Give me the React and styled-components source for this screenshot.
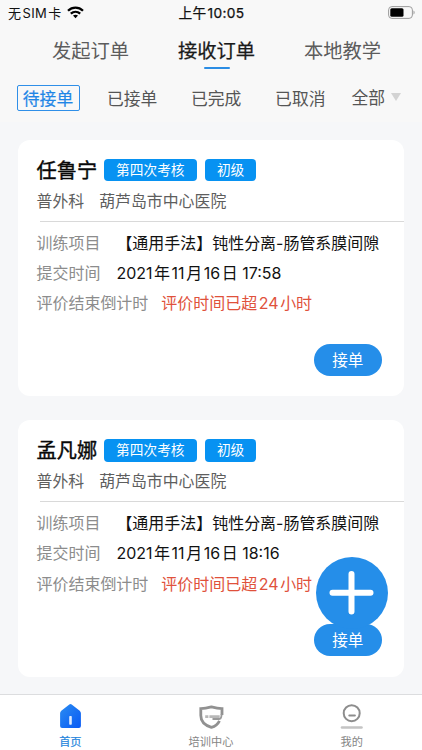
import React from 'react'
import styled, { createGlobalStyle } from 'styled-components'

const GlobalStyle = createGlobalStyle`
  * {
    box-sizing: border-box;
  }
  body {
    margin: 0;
    background: #f6f7f9;
    font-family: Inter, 'Noto Sans CJK SC', sans-serif;
  }
  button {
    font-family: inherit;
    border: 0;
    padding: 0;
    background: none;
  }
`

const Screen = styled.div`
  position: relative;
  display: flex;
  flex-direction: column;
  width: 422px;
  height: 750px;
  overflow: hidden;
  background: #f6f7f9;
  white-space: nowrap;
`

const Header = styled.header`
  height: 122px;
  background: #f8f8f8;
`

const StatusBar = styled.div`
  display: grid;
  grid-template-columns: 1fr auto 1fr;
  align-items: center;
  height: 24px;
  padding: 0 7px 0 8px;
  font-size: 13px;
  color: #111;
`

const Carrier = styled.div`
  display: flex;
  align-items: center;
  gap: 6px;
  letter-spacing: 0.3px;
`

const Clock = styled.div`
  font-size: 13.7px;
  -webkit-text-stroke: 0.25px #111;
  letter-spacing: 0.35px;
`

/* digits and latin words set inside chinese text */
const Num = styled.span`
  margin: 0 ${p => (p.$last ? 0 : p.$gap || 1.6)}px 0 ${p => (p.$first ? 0 : p.$gap || 1.6)}px;
`

const Battery = styled.svg`
  justify-self: end;
`

const Tabs = styled.nav`
  display: flex;
  justify-content: space-between;
  padding: 0 41px 0 52px;
  height: 54px;
`

const Tab = styled.button`
  display: flex;
  flex-direction: column;
  align-items: center;
  height: 45px;
  padding-top: 13px;
  font-size: 19.3px;
  line-height: 28px;
  color: ${p => (p.$active ? '#1a1a1a' : '#5c5c5c')};
  -webkit-text-stroke: ${p => (p.$active ? 0.25 : 0)}px currentColor;

  &::after {
    content: '';
    width: 26px;
    height: 2px;
    margin-top: 2px;
    border-radius: 1px;
    background: ${p => (p.$active ? '#2b8de4' : 'transparent')};
  }
`

const Filters = styled.div`
  display: flex;
  align-items: center;
  padding-left: 17px;
  height: 39px;
`

const Filter = styled.button`
  width: 63px;
  height: 26px;
  margin-right: 21.1px;
  padding: 1px 1px 0 0;
  border: 1.3px solid ${p => (p.$active ? '#2f8fe8' : 'transparent')};
  border-radius: 2px;
  font-size: 16.8px;
  line-height: 24px;
  color: ${p => (p.$active ? '#1f86e6' : '#555')};
  -webkit-text-stroke: ${p => (p.$active ? 0.2 : 0)}px currentColor;
`

const AllFilter = styled.button`
  display: flex;
  align-items: center;
  gap: 6px;
  margin-left: -2px;
  font-size: 16.8px;
  line-height: 24px;
  color: #555;
`

const Caret = styled.span`
  border: 5px solid transparent;
  border-top: 8px solid #d3d3d3;
  border-bottom: 0;
  margin-top: -2px;
`

const List = styled.main`
  display: flex;
  flex-direction: column;
  gap: 24px;
  flex: 1;
  padding: 17.5px 18px 0;
`

const Card = styled.article`
  display: flex;
  flex-direction: column;
  height: 256.5px;
  flex-shrink: 0;
  padding: 15px 0 0 18.5px;
  border-radius: 12px;
  background: #fff;
`

const CardHead = styled.div`
  display: flex;
  align-items: center;
  height: 31px;
`

const Name = styled.h2`
  margin: -2px 7px 0 0;
  font-size: 20.2px;
  font-weight: 400;
  color: #080808;
  -webkit-text-stroke: 0.4px currentColor;
`

const Badge = styled.span`
  width: ${p => p.$width}px;
  height: 22.5px;
  margin-right: 8.5px;
  border-radius: 4px;
  background: #0792f2;
  color: #fff;
  font-size: 13.7px;
  line-height: 23px;
  text-align: center;
`

const Origin = styled.div`
  display: flex;
  gap: 15px;
  height: 35px;
  font-size: 15.9px;
  line-height: 31px;
  color: #5e5e5e;
`

const Divider = styled.div`
  height: 1px;
  margin: 0 0 7px 3px;
  background: #d9d9d9;
`

const Field = styled.div`
  display: flex;
  gap: ${p => p.$gap || 16}px;
  height: 30.3px;
  font-size: 15.97px;
  line-height: 29px;
`

const Label = styled.span`
  color: #8c8c8c;
`

const Value = styled.span`
  color: ${p => (p.$late ? '#e0513b' : '#111')};
`

const AcceptButton = styled.button`
  align-self: flex-end;
  width: 67.5px;
  height: 32px;
  margin: 24.5px 22.5px 0 0;
  border-radius: 16px;
  background: #258ee9;
  color: #fff;
  font-size: 15.6px;
  line-height: 33px;
`

const AddButton = styled.button`
  position: absolute;
  left: 316px;
  top: 557px;
  width: 72px;
  height: 72px;
  border-radius: 50%;
  background: #258ee9;

  svg {
    display: block;
  }
`

const BottomBar = styled.nav`
  display: grid;
  grid-template-columns: repeat(3, 1fr);
  height: 56px;
  border-top: 1px solid #dcdddf;
  background: #fff;
`

const BottomItem = styled.button`
  display: flex;
  flex-direction: column;
  align-items: center;
  justify-content: flex-start;
  height: 55px;
  padding-top: 8px;
  font-size: 11.2px;
  line-height: 18px;
  color: ${p => (p.$active ? '#2585dc' : '#858585')};
  -webkit-text-stroke: ${p => (p.$active ? 0.2 : 0)}px currentColor;

  svg {
    margin-bottom: 4px;
    flex-shrink: 0;
  }
`

const WifiIcon = () => (
  <svg width="17" height="13" viewBox="0 0 17 13" fill="none" stroke="#000" strokeWidth="2.3">
    <path d="M1 4.7C5.3.5 11.7.5 16 4.7" />
    <path d="M3.8 7.7c2.8-2.5 6.6-2.5 9.4 0" />
    <path d="M6 9.6c1.5-1.2 3.5-1.2 5 0L8.5 12.2z" fill="#000" stroke="none" />
  </svg>
)

const BatteryIcon = () => (
  <Battery width="27" height="13" viewBox="0 0 27 13">
    <rect x=".6" y=".6" width="23.8" height="11.8" rx="3.3" fill="none" stroke="#9b9b9b" />
    <rect x="2.3" y="2.2" width="13.2" height="8.6" rx="1.5" fill="#000" />
    <path d="M25.5 4.5c1.5.8 1.5 3.2 0 4z" fill="#9b9b9b" />
  </Battery>
)

const HomeIcon = () => (
  <svg width="24" height="26" viewBox="0 0 24 26" stroke="none">
    <defs>
      <linearGradient id="home" x1="0" y1="0" x2="1" y2="1">
        <stop offset="0" stopColor="#2c8df1" />
        <stop offset="1" stopColor="#0759f5" />
      </linearGradient>
    </defs>
    <path d="M11.3 1.5q1.2-1 2.4 0l8 6.2q1.2 1 1.2 2.5v12.8q0 2-2 2H4.1q-2 0-2-2V10.2q0-1.5 1.2-2.5z" fill="url(#home)" />
    <rect x="11.2" y="13" width="2.6" height="8.7" rx=".8" fill="#dceaff" />
  </svg>
)

const ShieldIcon = () => (
  <svg width="26" height="26" viewBox="0 0 26 26" fill="none" stroke="#919191" strokeWidth="2.8">
    <path d="M24 12V5.6C20.4 5.6 17 4.9 13.4 3.9 9.8 4.9 6.4 5.6 2.8 5.6v7c0 6.2 4.5 10 10.6 11.8 3.5-1 6.4-3.2 8.1-6.6" />
    <path d="M14.5 16h6.7q1.7 0 2-1.8l.5-3" stroke="#999" strokeWidth="1.8" />
    <path d="M7.2 13.6h3.2M11.4 13.6h10.3" stroke="#b8b8b8" strokeWidth="2.6" />
  </svg>
)

const MineIcon = () => (
  <svg width="24" height="26" viewBox="0 0 24 26" fill="none" strokeLinecap="round">
    <circle cx="11.7" cy="10.2" r="8" stroke="#8d8d8d" strokeWidth="2" />
    <path d="M9.3 12.6h5.6" stroke="#8d8d8d" strokeWidth="2" />
    <path d="M2 24.5h19.5" stroke="#c4c4c4" strokeWidth="2.6" />
  </svg>
)

const orders = [
  { name: '任鲁宁', date: [2021, 11, 16], time: '17:58' },
  { name: '孟凡娜', date: [2021, 11, 16], time: '18:16' },
]

const OrderCard = ({ name, date, time }) => (
  <Card>
    <CardHead>
      <Name>{name}</Name>
      <Badge $width={92.5}>第四次考核</Badge>
      <Badge $width={51}>初级</Badge>
    </CardHead>
    <Origin>
      <span>普外科</span>
      <span>葫芦岛市中心医院</span>
    </Origin>
    <Divider />
    <Field>
      <Label>训练项目</Label>
      <Value>【通用手法】钝性分离-肠管系膜间隙</Value>
    </Field>
    <Field>
      <Label>提交时间</Label>
      <Value>
        <Num $first>{date[0]}</Num>年<Num>{date[1]}</Num>月<Num>{date[2]}</Num>日 {time}
      </Value>
    </Field>
    <Field $gap={13}>
      <Label>评价结束倒计时</Label>
      <Value $late>
        评价时间已超<Num>24</Num>小时
      </Value>
    </Field>
    <AcceptButton>接单</AcceptButton>
  </Card>
)

const App = () => (
  <Screen>
    <GlobalStyle />
    <Header>
      <StatusBar>
        <Carrier>
          <span>
            无<Num $gap={1.2}>SIM</Num>卡
          </span>
          <WifiIcon />
        </Carrier>
        <Clock>
          上午<Num $last $gap={1}>10:05</Num>
        </Clock>
        <BatteryIcon />
      </StatusBar>
      <Tabs>
        <Tab>发起订单</Tab>
        <Tab $active>接收订单</Tab>
        <Tab>本地教学</Tab>
      </Tabs>
      <Filters>
        <Filter $active>待接单</Filter>
        <Filter>已接单</Filter>
        <Filter>已完成</Filter>
        <Filter>已取消</Filter>
        <AllFilter>
          全部
          <Caret />
        </AllFilter>
      </Filters>
    </Header>
    <List>
      {orders.map(order => (
        <OrderCard key={order.name} {...order} />
      ))}
    </List>
    <AddButton aria-label="新增">
      <svg width="72" height="72" viewBox="0 0 72 72" stroke="#fff" strokeWidth="6" strokeLinecap="round">
        <path d="M35.5 17v37.5M16.5 35.7h38" />
      </svg>
    </AddButton>
    <BottomBar>
      <BottomItem $active>
        <HomeIcon />
        首页
      </BottomItem>
      <BottomItem>
        <ShieldIcon />
        培训中心
      </BottomItem>
      <BottomItem>
        <MineIcon />
        我的
      </BottomItem>
    </BottomBar>
  </Screen>
)

export default App
